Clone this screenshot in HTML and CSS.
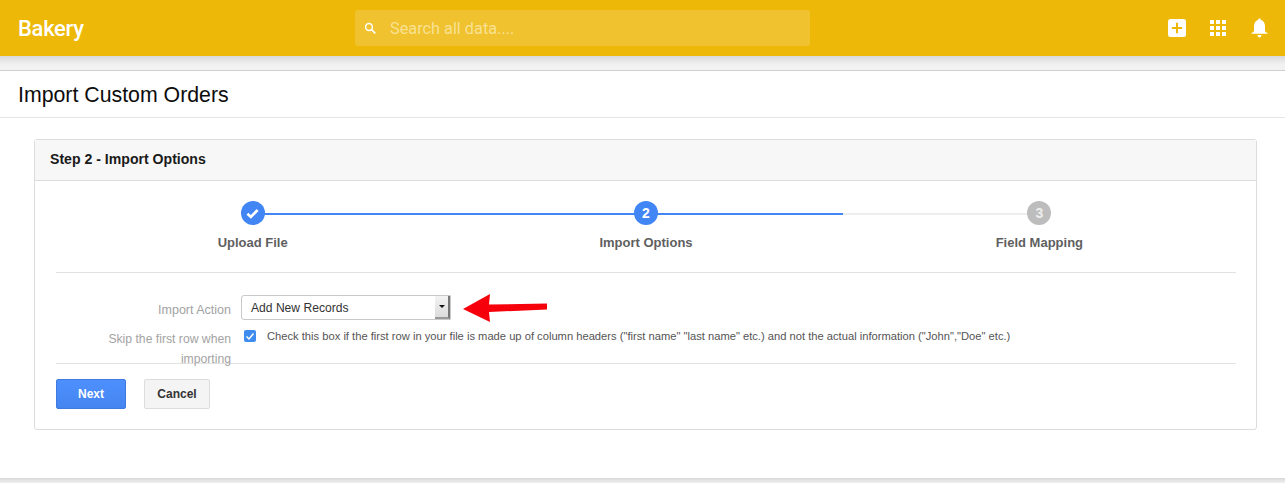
FILE: index.html
```html
<!DOCTYPE html>
<html lang="en">
<head>
<meta charset="utf-8">
<title>Import Custom Orders</title>
<link rel="stylesheet" href="styles.css">
</head>
<body>
<header class="topbar">
  <div class="brand">Bakery</div>
  <div class="search">
    <svg class="search-icon" width="12" height="12" viewBox="0 0 12 12"><circle cx="5" cy="5" r="3.4" fill="none" stroke="#fff" stroke-width="1.5"/><path d="M7.600 7.600L10.800 10.800" stroke="#fff" stroke-width="1.700" stroke-linecap="round"/></svg>
    <span class="search-text">Search all data....</span>
  </div>
  <div class="top-icons">
    <svg class="icon-add" width="18" height="18" viewBox="0 0 18 18"><rect width="18" height="18" rx="2.500" fill="#fff"/><path d="M9 3.800V14.200M3.800 9H14.200" stroke="#edb807" stroke-width="2"/></svg>
    <svg class="icon-grid" width="16" height="16" viewBox="0 0 16 16" fill="#fff"><rect width="4" height="4"/><rect x="6" width="4" height="4"/><rect x="12" width="4" height="4"/><rect y="6" width="4" height="4"/><rect x="6" y="6" width="4" height="4"/><rect x="12" y="6" width="4" height="4"/><rect y="12" width="4" height="4"/><rect x="6" y="12" width="4" height="4"/><rect x="12" y="12" width="4" height="4"/></svg>
    <svg class="icon-bell" width="17" height="20" viewBox="0 0 17 19" preserveAspectRatio="none" fill="#fff"><path d="M8.500 0.500c.8 0 1.300.5 1.400 1.300C12.500 2.500 14 4.700 14 7.500v4.300c0 1 .9 1.700 2.700 2.700v.5H.3v-.5C2.100 13.500 3 12.800 3 11.800V7.500c0-2.800 1.500-5 4.100-5.700C7.200 1 7.700.5 8.500.5z"/><path d="M6.500 16.200h4c0 1.300-.9 2.300-2 2.300s-2-1-2-2.300z"/></svg>
  </div>
</header>
<div class="band"></div>
<div class="page-title"><h1>Import Custom Orders</h1></div>
<main class="content">
  <section class="panel">
    <div class="panel-head">Step 2 - Import Options</div>
    <div class="panel-body">
      <div class="wizard">
        <div class="step">
          <div class="track"><span class="half"></span><span class="half blue"></span></div>
          <div class="dot blue-dot"><svg width="13" height="11" viewBox="0 0 12 10"><path d="M1.300 5.200L4.500 8.200L10.700 1.800" fill="none" stroke="#fff" stroke-width="2.500"/></svg></div>
          <div class="step-label">Upload File</div>
        </div>
        <div class="step">
          <div class="track"><span class="half blue"></span><span class="half blue"></span></div>
          <div class="dot blue-dot">2</div>
          <div class="step-label">Import Options</div>
        </div>
        <div class="step">
          <div class="track"><span class="half grey"></span><span class="half"></span></div>
          <div class="dot grey-dot">3</div>
          <div class="step-label">Field Mapping</div>
        </div>
      </div>
      <div class="form">
        <div class="row row-select">
          <label class="row-label row-label-select">Import Action</label>
          <div class="select">
            <span class="select-value">Add New Records</span>
            <span class="select-btn"><i class="caret"></i></span>
          </div>
          <svg class="arrow" width="86" height="30" viewBox="0 0 86 30"><path d="M0 15L27 0L26 10.500L84 9.500L84 15.500L26 18L27 28Z" fill="#f5000b"/></svg>
        </div>
        <div class="row row-check">
          <label class="row-label row-label-skip">Skip the first row when importing</label>
          <span class="checkbox"><svg width="10" height="9" viewBox="0 0 10 9"><path d="M1.500 4.500L4 7L8.500 1.500" fill="none" stroke="#fff" stroke-width="1.500"/></svg></span>
          <span class="check-text">Check this box if the first row in your file is made up of column headers ("first name" "last name" etc.) and not the actual information ("John","Doe" etc.)</span>
        </div>
      </div>
      <div class="actions">
        <button class="btn btn-next">Next</button>
        <button class="btn btn-cancel">Cancel</button>
      </div>
    </div>
  </section>
</main>
<div class="footer-line"></div>
</body>
</html>
```

FILE: styles.css
```css
* { box-sizing: border-box; }
html, body { margin: 0; padding: 0; height: 483px; overflow: hidden; background: #fff; }
body { font-family: "Liberation Sans", Arial, sans-serif; color: #333; }

.topbar { height: 56px; background: #edb807; display: flex; align-items: center; position: relative; padding-left: 18px; }
.brand { width: 337px; font-family: Roboto, sans-serif; font-size: 22px; font-weight: 500; color: #fff; letter-spacing: -0.3px; }
.search { width: 455px; height: 36px; border-radius: 3px; background: #f0c22f; display: flex; align-items: center; padding-left: 9px; }
.search-icon { margin-right: 14px; }
.search-text { font-family: Roboto, sans-serif; font-size: 16.300px; color: #f8e193; }
.top-icons { margin-left: auto; display: flex; align-items: center; }
.icon-add { margin-right: 24px; }
.icon-grid { margin-right: 25px; }
.icon-bell { margin-right: 17px; }

.band { height: 15px; background: linear-gradient(#d9d9d9, #f1f1f1 60%, #f3f3f3); border-bottom: 1px solid #d0d0d0; }

.page-title { height: 47px; border-bottom: 1px solid #e6e6e6; padding: 2px 0 0 18px; display: flex; align-items: center; }
.page-title h1 { margin: 0; font-size: 21.300px; font-weight: 400; color: #0d0d0d; line-height: 44px; }

.content { padding: 21px 28px 0 34px; }
.panel { height: 291px; border: 1px solid #dcdcdc; border-radius: 3px; }
.panel-head { height: 41px; background: #f7f7f7; border-bottom: 1px solid #dddddd; padding-left: 15px; font-size: 14.100px; font-weight: 700; color: #1a1a1a; line-height: 38px; }
.panel-body { padding: 0 20px 0 21px; }

.wizard { display: grid; grid-template-columns: repeat(3, 1fr); height: 92px; border-bottom: 1px solid #e2e2e2; }
.step { position: relative; display: flex; flex-direction: column; align-items: center; padding-top: 20px; }
.track { position: absolute; left: 0; right: 0; top: 32px; height: 2px; display: flex; }
.half { flex: 1; }
.half.blue { background: #4285f4; }
.half.grey { background: #eeeeee; }
.dot { position: relative; width: 24px; height: 24px; border-radius: 50%; display: flex; align-items: center; justify-content: center; color: #fff; font-size: 14px; font-weight: 700; }
.blue-dot { background: #4285f4; }
.grey-dot { background: #bdbdbd; color: #eee; }
.step-label { margin-top: 10px; font-size: 13px; font-weight: 700; color: #5f5f5f; }

.form { height: 91px; border-bottom: 1px solid #e2e2e2; }
.row { display: flex; position: relative; }
.row-select { padding-top: 22px; height: 53px; }
.row-label { width: 175px; padding-left: 45px; text-align: right; font-size: 12.500px; line-height: 20px; color: #a3a3a3; flex: none; }
.row-label-select { padding-top: 5px; }
.row-label-skip { padding-top: 3px; font-size: 12.200px; }
.select { width: 210px; height: 25px; margin-left: 10px; border: 1px solid #c9c9c9; border-radius: 3px 0 0 3px; background: #fff; display: flex; justify-content: space-between; align-items: stretch; }
.select-value { font-size: 12.100px; line-height: 24px; padding-left: 9px; color: #333; }
.select-btn { width: 15px; background: linear-gradient(#f3f3f3, #dcdcdc); border-right: 2px solid #777; border-bottom: 2px solid #999; display: flex; align-items: center; justify-content: center; }
.caret { display: block; width: 0; height: 0; border-left: 3px solid transparent; border-right: 3px solid transparent; border-top: 3px solid #111; }
.arrow { position: absolute; left: 407px; top: 21px; }

.row-check { height: 38px; }
.checkbox { width: 12px; height: 12px; margin: 4px 0 0 13px; border-radius: 2px; background: #3f8cf0; display: flex; align-items: center; justify-content: center; flex: none; }
.check-text { margin: 1px 0 0 11px; font-size: 11.180px; line-height: 18px; color: #555; white-space: nowrap; }

.actions { display: flex; gap: 18px; padding-top: 15px; }
.btn { height: 30px; border-radius: 2px; font-family: "Liberation Sans", Arial, sans-serif; font-size: 12px; font-weight: 700; padding: 0; }
.btn-next { width: 70px; background: linear-gradient(#4d90fe, #4585f0); border: 1px solid #3f7ae0; color: #fff; }
.btn-cancel { width: 66px; background: #f4f4f4; border: 1px solid #dcdcdc; color: #333; }

.footer-line { position: absolute; left: 0; right: 0; top: 478px; height: 5px; background: linear-gradient(#d8d8d8, #f1f1f1); }
```
